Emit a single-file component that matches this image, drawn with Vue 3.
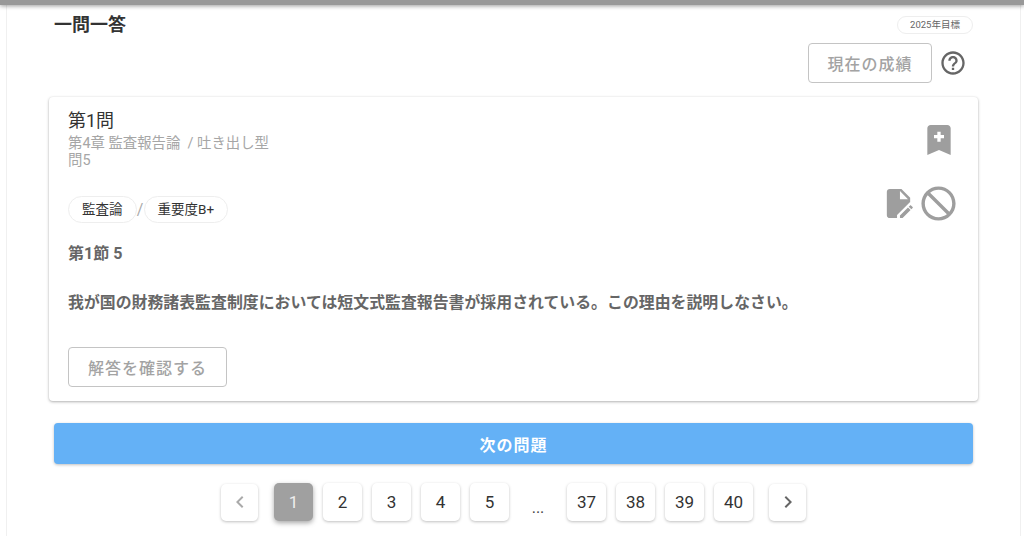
<script setup>
const left = ['1', '2', '3', '4', '5']
const right = ['37', '38', '39', '40']
</script>

<template>
  <div class="page">
    <div class="topbar"></div>
    <main class="sheet">
      <header class="head">
        <h1 class="title">一問一答</h1>
        <span class="year">2025年目標</span>
      </header>
      <div class="score-row">
        <button class="outline score">現在の成績</button>
        <svg class="help" viewBox="0 0 24 24" width="28" height="28"><path fill="#666" d="M11 18h2v-2h-2v2zm1-16C6.48 2 2 6.48 2 12s4.48 10 10 10 10-4.48 10-10S17.52 2 12 2zm0 18c-4.41 0-8-3.59-8-8s3.59-8 8-8 8 3.59 8 8-3.59 8-8 8zm0-14c-2.21 0-4 1.79-4 4h2c0-1.1.9-2 2-2s2 .9 2 2c0 2-3 1.75-3 5h2c0-2.25 3-2.5 3-5 0-2.21-1.79-4-4-4z"/></svg>
      </div>
      <section class="card">
        <div class="card-top">
          <div>
            <div class="q-no">第1問</div>
            <div class="meta">第4章 監査報告論&nbsp; / 吐き出し型</div>
            <div class="meta">問5</div>
          </div>
          <svg class="bookmark" viewBox="0 0 24 24" width="40" height="40"><path fill="#9e9e9e" d="M17 3H7c-1.1 0-2 .9-2 2v16l7-3 7 3V5c0-1.1-.9-2-2-2zm-2 8h-2v2h-2v-2H9V9h2V7h2v2h2v2z"/></svg>
        </div>
        <div class="tag-row">
          <div class="tags">
            <span class="chip">監査論</span>
            <span class="slash">/</span>
            <span class="chip">重要度B+</span>
          </div>
          <div class="tools">
            <svg class="note" viewBox="0 0 24 24" width="35" height="35"><path fill="#9e9e9e" d="M14 2H6c-1.1 0-2 .9-2 2v16c0 1.1.9 2 2 2h5v-2.1l8.1-8.1c.3-.3.6-.5.9-.6V8l-6-6zm-1 7V3.5L18.5 9H13z"/><path fill="#9e9e9e" d="M13 20.2V22h1.8l5.5-5.5-1.8-1.8L13 20.2zm8.7-5.1c.2-.2.2-.5 0-.7l-1.1-1.1c-.2-.2-.5-.2-.7 0l-.9.9 1.8 1.8.9-.9z"/></svg>
            <svg viewBox="0 0 24 24" width="41" height="41"><path fill="#9e9e9e" d="M12 2C6.48 2 2 6.48 2 12s4.48 10 10 10 10-4.48 10-10S17.52 2 12 2zM4 12c0-4.42 3.58-8 8-8 1.85 0 3.55.63 4.9 1.69L5.69 16.9C4.63 15.55 4 13.85 4 12zm8 8c-1.85 0-3.55-.63-4.9-1.69L18.31 7.1C19.37 8.45 20 10.15 20 12c0 4.42-3.58 8-8 8z" transform="matrix(-1 0 0 1 24 0)"/></svg>
          </div>
        </div>
        <div class="section-name">第1節 5</div>
        <p class="question">我が国の財務諸表監査制度においては短文式監査報告書が採用されている。この理由を説明しなさい。</p>
        <button class="outline answer">解答を確認する</button>
      </section>
      <button class="next">次の問題</button>
      <nav class="pager">
        <button class="arrow"><svg viewBox="0 0 24 24" width="24" height="24"><path fill="#aaa" d="M15.41 7.41 14 6l-6 6 6 6 1.41-1.41L10.83 12z"/></svg></button>
        <div class="pages first">
          <button v-for="p in left" :key="p" class="num" :class="{ active: p === '1' }">{{ p }}</button>
        </div>
        <span class="dots">...</span>
        <div class="pages">
          <button v-for="p in right" :key="p" class="num">{{ p }}</button>
        </div>
        <button class="arrow"><svg viewBox="0 0 24 24" width="24" height="24"><path fill="#666" d="M10 6 8.59 7.41 13.17 12l-4.58 4.59L10 18l6-6z"/></svg></button>
      </nav>
    </main>
  </div>
</template>

<style>
html, body { margin: 0; background: #fff; overflow: hidden; }
</style>

<style scoped>
.page {
  width: 1024px;
  height: 536px;
  overflow: hidden;
  position: relative;
  background: #fff;
  font-family: Roboto, "Noto Sans CJK JP", sans-serif;
  color: #333;
}
.topbar {
  height: 5px;
  background: #999;
  box-shadow: 0 1px 4px rgba(0, 0, 0, 0.4);
  position: relative;
  z-index: 1;
}
.sheet {
  margin: 0 3px 0 6px;
  padding: 9px 47px 0;
  height: 531px;
  box-sizing: border-box;
  border-left: 1px solid #f0f0f0;
  border-right: 1px solid #f0f0f0;
}
.head { display: flex; justify-content: space-between; align-items: flex-start; }
.title { margin: 0; font-size: 18px; line-height: 22px; font-weight: 700; color: #333; }
.year {
  margin-top: 2px;
  width: 76px;
  height: 18px;
  box-sizing: border-box;
  border: 1px solid #eee;
  border-radius: 9px;
  font-size: 9.5px;
  line-height: 16px;
  text-align: center;
  color: #666;
}
.score-row { display: flex; justify-content: flex-end; align-items: center; gap: 7px; margin-top: 7px; padding-right: 6px; }
.help { display: block; }
button { font-family: inherit; background: #fff; cursor: pointer; }
.outline {
  border: 1px solid #c4c4c4;
  border-radius: 4px;
  color: #a3a3a3;
  font-size: 16px;
  font-weight: 500;
  letter-spacing: 1px;
  padding: 0;
  box-sizing: border-box;
}
.score { width: 124px; height: 40px; }
.card {
  margin: 14px -5px 0;
  height: 304px;
  box-sizing: border-box;
  padding: 12px 19px 13px;
  background: #fff;
  border-radius: 4px;
  box-shadow: 0 1px 3px rgba(0, 0, 0, 0.3), 0 0 2px rgba(0, 0, 0, 0.06);
  display: flex;
  flex-direction: column;
  align-items: flex-start;
}
.card-top { display: flex; justify-content: space-between; align-self: stretch; align-items: flex-start; }
.q-no { font-size: 18px; line-height: 24px; margin-bottom: 2px; color: #333; }
.meta { font-size: 14.4px; line-height: 17px; color: #a6a6a6; }
.bookmark { margin: 11px 0 0; display: block; }
.tag-row { display: flex; justify-content: space-between; align-self: stretch; align-items: flex-start; margin-top: 14px; height: 41px; }
.tags { display: flex; align-items: center; margin-top: 13px; }
.chip {
  height: 27px;
  box-sizing: border-box;
  border: 1px solid #eee;
  border-radius: 14px;
  padding: 0 13px;
  font-size: 13.5px;
  line-height: 25px;
  color: #333;
}
.slash { color: #aaa; font-size: 16px; width: 7px; text-align: center; }
.tools { display: flex; align-items: center; gap: 2px; }
.tools svg { display: block; }
.section-name { margin-top: 20px; font-size: 16px; line-height: 20px; font-weight: 700; color: #666; }
.question { margin: 28px 0 0; font-size: 15.9px; line-height: 22px; font-weight: 700; color: #666; }
.answer { margin-top: 33px; width: 159px; height: 40px; }
.next {
  display: block;
  width: 100%;
  height: 41px;
  margin-top: 22px;
  background: #64b1f6;
  border: 0;
  border-radius: 4px;
  color: #fff;
  font-size: 16px;
  font-weight: 700;
  letter-spacing: 1px;
  box-shadow: 0 1px 3px rgba(0, 0, 0, 0.25);
}
.pager { display: flex; justify-content: center; align-items: center; margin-top: 19px; }
.pages { display: flex; gap: 10px; }
.pages.first { margin-left: 16px; }
.num, .arrow {
  border: 0;
  padding: 0;
  height: 38px;
  background: #fff;
  border-radius: 5px;
  box-shadow: 0 1px 3px rgba(0, 0, 0, 0.25);
  color: #333;
  font-size: 17px;
  display: flex;
  align-items: center;
  justify-content: center;
}
.num { width: 39px; }
.arrow { width: 37px; height: 37px; }
.active { background: #a0a0a0; color: #eee; box-shadow: 0 2px 5px rgba(0, 0, 0, 0.35); }
.dots { width: 58px; text-align: center; font-size: 16px; color: #444; padding-top: 10px; }
.pager > .arrow:last-child { margin-left: 16px; }
</style>
